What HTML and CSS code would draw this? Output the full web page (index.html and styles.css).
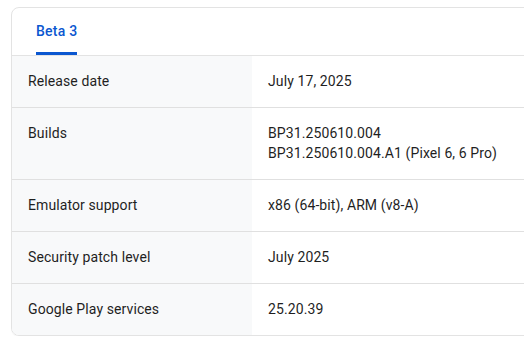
FILE: index.html
```html
<!DOCTYPE html>
<html lang="en">
<head>
    <meta charset="UTF-8">
    <meta name="viewport" content="width=device-width, initial-scale=1.0">
    <title>Beta 3</title>
    <link rel="stylesheet" href="styles.css">
</head>
<body>
    <div class="card">
        <!-- Tabs -->
        <div class="tabs">
            <a href="#" class="tab active">Beta 3</a>
        </div>

        <!-- Release details -->
        <table class="details">
            <tr>
                <th>Release date</th>
                <td>July 17, 2025</td>
            </tr>
            <tr>
                <th>Builds</th>
                <td>BP31.250610.004<br>BP31.250610.004.A1 (Pixel 6, 6 Pro)</td>
            </tr>
            <tr>
                <th>Emulator support</th>
                <td>x86 (64-bit), ARM (v8-A)</td>
            </tr>
            <tr>
                <th>Security patch level</th>
                <td>July 2025</td>
            </tr>
            <tr>
                <th>Google Play services</th>
                <td>25.20.39</td>
            </tr>
        </table>
    </div>
</body>
</html>
```

FILE: styles.css
```css
/* Reset */
body, table, th, td {
    margin: 0;
    padding: 0;
}

body {
    margin: 7px 0 0 11px;
    font-family: Roboto, "Noto Sans", Arial, sans-serif;
    font-size: 14px;
    color: #1f1f1f;
    background: #fff;
}

/* Card */
.card {
    width: 640px;
    border: 1px solid #e3e3e3;
    border-radius: 8px;
    overflow: hidden;
    box-shadow: 0 1px 1px rgba(0, 0, 0, 0.04);
}

/* Tabs */
.tabs {
    display: flex;
    height: 47px;
    padding-left: 24px;
    border-bottom: 1px solid #e3e3e3;
}

.tab {
    display: flex;
    align-items: center;
    padding-top: 2px;
    color: #0b57d0;
    font-weight: 500;
    text-decoration: none;
    border-bottom: 3px solid #0b57d0;
    border-radius: 3px 3px 0 0;
    letter-spacing: 0.25px;
}

/* Details table */
.details {
    width: 100%;
    border-collapse: collapse;
}

.details th,
.details td {
    text-align: left;
    vertical-align: top;
    padding: 15px 16px 16px;
    line-height: 20px;
    letter-spacing: 0.1px;
    border-top: 1px solid #e0e0e0;
}

.details tr:first-child th,
.details tr:first-child td {
    border-top: none;
}

.details th {
    width: 208px;
    font-weight: 400;
    background: #f8f9fa;
}
```
